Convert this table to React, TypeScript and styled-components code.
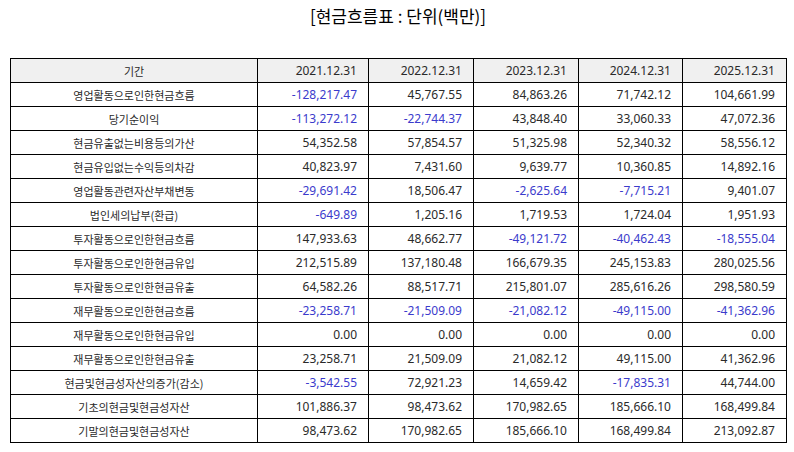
import React from "react";
import styled, { createGlobalStyle } from "styled-components";

const Global = createGlobalStyle`
  html, body { margin: 0; padding: 0; background: #fff; }
  body { font-family: "Noto Sans", "Noto Sans CJK KR", sans-serif; color: #111; }
`;

const Page = styled.div`
  width: 794px;
  height: 452px;
  padding: 0 8px 0 10px;
  box-sizing: border-box;
  display: flex;
  flex-direction: column;
`;

const Title = styled.h1`
  margin: 0;
  height: 58px;
  padding-top: 4px;
  box-sizing: border-box;
  font-family: "Noto Sans CJK KR", sans-serif;
  font-size: 17px;
  font-weight: 400;
  text-align: center;
  line-height: 24px;
  color: #000;
`;

const Table = styled.table`
  width: 776px;
  border-collapse: collapse;
  table-layout: fixed;
  font-size: 12px;
`;

const Th = styled.th<{ $label?: boolean }>`
  height: 23px;
  padding: 0 11px;
  border: 1px solid #000;
  background: #f0f0f0;
  font-weight: 400;
  font-size: ${(p) => (p.$label ? "11px" : "12px")};
  font-family: ${(p) => (p.$label ? '"Noto Sans CJK KR", sans-serif' : '"Noto Sans", sans-serif')};
  text-align: ${(p) => (p.$label ? "center" : "right")};
  color: #2a2a2a;
`;

const Td = styled.td<{ $label?: boolean; $neg?: boolean }>`
  height: 23px;
  padding: 0 11px;
  border: 1px solid #000;
  font-size: ${(p) => (p.$label ? "11px" : "12px")};
  font-family: ${(p) => (p.$label ? '"Noto Sans CJK KR", sans-serif' : '"Noto Sans", sans-serif')};
  text-align: ${(p) => (p.$label ? "center" : "right")};
  color: ${(p) => (p.$neg ? "#3b3bcc" : "#2a2a2a")};
  white-space: nowrap;
`;

const years = ["2021.12.31", "2022.12.31", "2023.12.31", "2024.12.31", "2025.12.31"];
const widths = [247, 111, 105, 105, 104, 104];

const rows: [string, string[]][] = [
  ["영업활동으로인한현금흐름", ["-128,217.47", "45,767.55", "84,863.26", "71,742.12", "104,661.99"]],
  ["당기순이익", ["-113,272.12", "-22,744.37", "43,848.40", "33,060.33", "47,072.36"]],
  ["현금유출없는비용등의가산", ["54,352.58", "57,854.57", "51,325.98", "52,340.32", "58,556.12"]],
  ["현금유입없는수익등의차감", ["40,823.97", "7,431.60", "9,639.77", "10,360.85", "14,892.16"]],
  ["영업활동관련자산부채변동", ["-29,691.42", "18,506.47", "-2,625.64", "-7,715.21", "9,401.07"]],
  ["법인세의납부(환급)", ["-649.89", "1,205.16", "1,719.53", "1,724.04", "1,951.93"]],
  ["투자활동으로인한현금흐름", ["147,933.63", "48,662.77", "-49,121.72", "-40,462.43", "-18,555.04"]],
  ["투자활동으로인한현금유입", ["212,515.89", "137,180.48", "166,679.35", "245,153.83", "280,025.56"]],
  ["투자활동으로인한현금유출", ["64,582.26", "88,517.71", "215,801.07", "285,616.26", "298,580.59"]],
  ["재무활동으로인한현금흐름", ["-23,258.71", "-21,509.09", "-21,082.12", "-49,115.00", "-41,362.96"]],
  ["재무활동으로인한현금유입", ["0.00", "0.00", "0.00", "0.00", "0.00"]],
  ["재무활동으로인한현금유출", ["23,258.71", "21,509.09", "21,082.12", "49,115.00", "41,362.96"]],
  ["현금및현금성자산의증가(감소)", ["-3,542.55", "72,921.23", "14,659.42", "-17,835.31", "44,744.00"]],
  ["기초의현금및현금성자산", ["101,886.37", "98,473.62", "170,982.65", "185,666.10", "168,499.84"]],
  ["기말의현금및현금성자산", ["98,473.62", "170,982.65", "185,666.10", "168,499.84", "213,092.87"]],
];

export default function App() {
  return (
    <>
      <Global />
      <Page>
        <Title>[현금흐름표 : 단위(백만)]</Title>
        <Table>
          <colgroup>
            {widths.map((w, i) => (
              <col key={i} style={{ width: w }} />
            ))}
          </colgroup>
          <thead>
            <tr>
              <Th $label>기간</Th>
              {years.map((y) => (
                <Th key={y}>{y}</Th>
              ))}
            </tr>
          </thead>
          <tbody>
            {rows.map(([label, vals]) => (
              <tr key={label}>
                <Td $label>{label}</Td>
                {vals.map((v, i) => (
                  <Td key={i} $neg={v.startsWith("-")}>
                    {v}
                  </Td>
                ))}
              </tr>
            ))}
          </tbody>
        </Table>
      </Page>
    </>
  );
}
